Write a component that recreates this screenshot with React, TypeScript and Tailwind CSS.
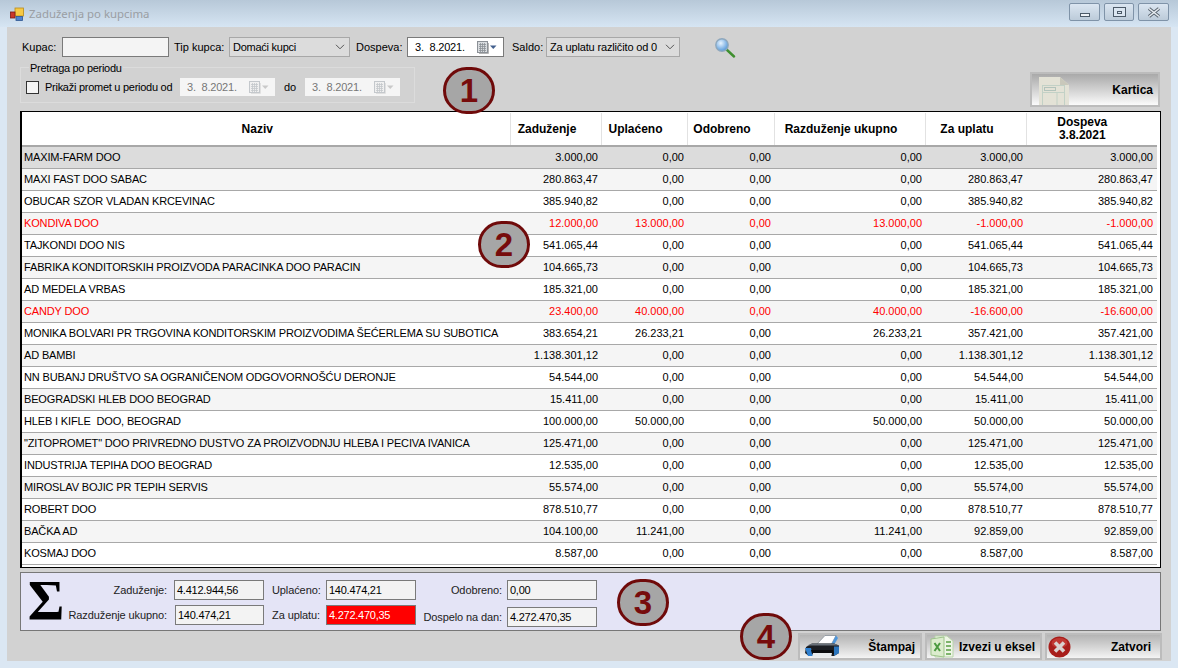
import React from "react";

const FONT = "font-['Liberation_Sans',Arial,sans-serif]";

type Row = { name: string; v: string[]; red?: boolean };

const rows: Row[] = [
  { name: "MAXIM-FARM DOO", v: ["3.000,00", "0,00", "0,00", "0,00", "3.000,00", "3.000,00"] },
  { name: "MAXI FAST DOO SABAC", v: ["280.863,47", "0,00", "0,00", "0,00", "280.863,47", "280.863,47"] },
  { name: "OBUCAR SZOR VLADAN KRCEVINAC", v: ["385.940,82", "0,00", "0,00", "0,00", "385.940,82", "385.940,82"] },
  { name: "KONDIVA DOO", v: ["12.000,00", "13.000,00", "0,00", "13.000,00", "-1.000,00", "-1.000,00"], red: true },
  { name: "TAJKONDI DOO NIS", v: ["541.065,44", "0,00", "0,00", "0,00", "541.065,44", "541.065,44"] },
  { name: "FABRIKA KONDITORSKIH PROIZVODA PARACINKA DOO PARACIN", v: ["104.665,73", "0,00", "0,00", "0,00", "104.665,73", "104.665,73"] },
  { name: "AD MEDELA VRBAS", v: ["185.321,00", "0,00", "0,00", "0,00", "185.321,00", "185.321,00"] },
  { name: "CANDY DOO", v: ["23.400,00", "40.000,00", "0,00", "40.000,00", "-16.600,00", "-16.600,00"], red: true },
  { name: "MONIKA BOLVARI PR TRGOVINA KONDITORSKIM PROIZVODIMA ŠEĆERLEMA SU SUBOTICA", v: ["383.654,21", "26.233,21", "0,00", "26.233,21", "357.421,00", "357.421,00"] },
  { name: "AD BAMBI", v: ["1.138.301,12", "0,00", "0,00", "0,00", "1.138.301,12", "1.138.301,12"] },
  { name: "NN BUBANJ DRUŠTVO SA OGRANIČENOM ODGOVORNOŠĆU DERONJE", v: ["54.544,00", "0,00", "0,00", "0,00", "54.544,00", "54.544,00"] },
  { name: "BEOGRADSKI HLEB DOO BEOGRAD", v: ["15.411,00", "0,00", "0,00", "0,00", "15.411,00", "15.411,00"] },
  { name: "HLEB I KIFLE  DOO, BEOGRAD", v: ["100.000,00", "50.000,00", "0,00", "50.000,00", "50.000,00", "50.000,00"] },
  { name: "\"ZITOPROMET\" DOO PRIVREDNO DUSTVO ZA PROIZVODNJU HLEBA I PECIVA IVANICA", v: ["125.471,00", "0,00", "0,00", "0,00", "125.471,00", "125.471,00"] },
  { name: "INDUSTRIJA TEPIHA DOO BEOGRAD", v: ["12.535,00", "0,00", "0,00", "0,00", "12.535,00", "12.535,00"] },
  { name: "MIROSLAV BOJIC PR TEPIH SERVIS", v: ["55.574,00", "0,00", "0,00", "0,00", "55.574,00", "55.574,00"] },
  { name: "ROBERT DOO", v: ["878.510,77", "0,00", "0,00", "0,00", "878.510,77", "878.510,77"] },
  { name: "BAČKA AD", v: ["104.100,00", "11.241,00", "0,00", "11.241,00", "92.859,00", "92.859,00"] },
  { name: "KOSMAJ DOO", v: ["8.587,00", "0,00", "0,00", "0,00", "8.587,00", "8.587,00"] },
];

const headers = ["Zaduženje", "Uplaćeno", "Odobreno", "Razduženje ukupno", "Za uplatu"];

function Chevron() {
  return (
    <svg width="10" height="6" viewBox="0 0 10 6" fill="none" stroke="#555" strokeWidth="1">
      <path d="M1 0.8 L5 4.8 L9 0.8" />
    </svg>
  );
}

function CalendarIcon({ disabled }: { disabled?: boolean }) {
  const c = disabled ? "#c4c8cc" : "#8b9096";
  return (
    <svg width="20" height="13" viewBox="0 0 20 13">
      <rect x="0.5" y="0.5" width="10" height="11" fill={disabled ? "#f0f0f0" : "#d9dcdf"} stroke={c} />
      <path d="M2 3.5H9M2 5.5H9M2 7.5H9M2 9.5H9M3.5 2V11M5.5 2V11M7.5 2V11" stroke={c} strokeWidth="0.8" />
      <path d="M11.5 2V12.5H2" stroke={disabled ? "#e0e0e0" : "#b5b5b5"} fill="none" />
      <path d="M13 4.5H19.5L16.25 8Z" fill={disabled ? "#c9c9c9" : "#44618e"} />
    </svg>
  );
}

function DateBox({ disabled, className }: { disabled?: boolean; className: string }) {
  return (
    <div
      className={`flex items-center justify-between pl-[7px] pr-[6px] ${className} ${
        disabled ? "bg-[#f5f5f5] text-[#777]" : "bg-white border border-[#7a7a7a] text-black"
      }`}
    >
      <span className="whitespace-pre tracking-[-0.2px]">3.  8.2021.</span>
      <CalendarIcon disabled={disabled} />
    </div>
  );
}

function SelectBox({ text, className, tracking }: { text: string; className: string; tracking: string }) {
  return (
    <div className={`flex items-center justify-between h-5 bg-[#dcdcdc] border border-[#a8a8a8] pl-[3px] pr-[4px] ${className}`}>
      <span className={`whitespace-nowrap ${tracking}`}>{text}</span>
      <Chevron />
    </div>
  );
}

function SearchIcon() {
  return (
    <svg width="22" height="21" viewBox="0 0 22 21" className="ml-[34px]">
      <defs>
        <radialGradient id="lens" cx="0.4" cy="0.35" r="0.7">
          <stop offset="0" stopColor="#e8f4ff" />
          <stop offset="1" stopColor="#4c93d8" />
        </radialGradient>
      </defs>
      <path d="M12 12L20 19.5" stroke="#3f8f2f" strokeWidth="2.4" strokeLinecap="round" />
      <circle cx="8" cy="8" r="6.2" fill="url(#lens)" stroke="#8fa8bd" strokeWidth="1.4" />
    </svg>
  );
}

function WindowIcon() {
  return (
    <svg width="14" height="14" viewBox="0 0 14 14" className="ml-[10px]">
      <rect x="5" y="1" width="8.5" height="8" fill="#f6c945" stroke="#b98a18" strokeWidth="0.8" />
      <rect x="0.5" y="5" width="4.5" height="6" fill="#c9362b" stroke="#7c1b14" strokeWidth="0.8" />
      <rect x="6" y="9.5" width="6.5" height="4" fill="#4f83cf" stroke="#2d5590" strokeWidth="0.8" />
    </svg>
  );
}

function CaptionButton({ kind, className }: { kind: "min" | "max" | "close"; className: string }) {
  return (
    <div className={`h-[18px] flex items-center justify-center rounded-[2px] border border-[#7f93a8] bg-gradient-to-b from-[#dbe6f1] to-[#bccbd9] ${className}`}>
      {kind === "min" && <div className="w-[10px] h-[4px] mt-[5px] border border-[#4c5a68] bg-[#eef2f6]" />}
      {kind === "max" && (
        <div className="w-[13px] h-[10px] border border-[#4c5a68] flex items-center justify-center bg-[#dbe6f1]">
          <div className="w-[5px] h-[3px] border border-[#4c5a68]" />
        </div>
      )}
      {kind === "close" && (
        <svg width="14" height="11" viewBox="0 0 14 11">
          <path d="M2 1.5L12 9.5M12 1.5L2 9.5" stroke="#56616c" strokeWidth="3.4" />
          <path d="M2 1.5L12 9.5M12 1.5L2 9.5" stroke="#e8edf2" strokeWidth="1.6" />
        </svg>
      )}
    </div>
  );
}

function KarticaIcon() {
  return (
    <svg width="30" height="28" viewBox="0 0 30 28" className="self-end">
      <path d="M0 0H21L30 8V28H0Z" fill="#e3e2d6" />
      <path d="M21 0L30 8H21Z" fill="#c9c8bb" />
      <rect x="3.5" y="8.5" width="22" height="20" fill="none" stroke="#c2d1c6" />
      <rect x="5.5" y="10.5" width="11" height="3" fill="none" stroke="#b2c3bb" />
      <path d="M3.5 15.5H25.5M18 15.5V28" stroke="#c2d1c6" />
    </svg>
  );
}

function PrinterIcon() {
  return (
    <svg width="36" height="23" viewBox="0 0 36 23">
      <path d="M12 10L21 0.5H32L27 10Z" fill="#ffffff" stroke="#7d8790" strokeWidth="0.7" />
      <path d="M32 0.5L34 3L30 10H27Z" fill="#4f97dc" />
      <path d="M2 12L8 8.5H30L35 10.5V18L30 21H5L1 18Z" fill="#1c1f24" />
      <path d="M8 8.5H30L35 10.5H3Z" fill="#6a727b" />
      <path d="M1 13L4 21H9L7 13Z" fill="#2f80d0" />
      <path d="M30 11.5H35V18L30 21Z" fill="#2b75bd" />
      <path d="M7 15H29L30 19H8Z" fill="#0b0c0e" />
      <path d="M9 18H28L27 22.5H8Z" fill="#e9ecee" />
    </svg>
  );
}

function ExcelIcon() {
  return (
    <svg width="24" height="24" viewBox="0 0 24 24">
      <path d="M5 1H17L23 6V22H5Z" fill="#eef5e6" stroke="#b9d4ab" />
      <path d="M1 4L14 2V22L1 20Z" fill="#dcecce" stroke="#9cc489" />
      <path d="M4.5 8L10 16M10 8L4.5 16" stroke="#4b9a40" strokeWidth="2" />
      <path d="M16 7H21M16 11H21M16 15H21M16 19H21" stroke="#7eb56c" strokeWidth="2" />
    </svg>
  );
}

function CloseIcon() {
  return (
    <svg width="23" height="22" viewBox="0 0 23 22">
      <ellipse cx="11.5" cy="11" rx="11" ry="10.5" fill="#a81e1b" />
      <ellipse cx="11.5" cy="7" rx="8" ry="5" fill="#d8524c" opacity="0.5" />
      <path d="M7 6.5L16 15.5M16 6.5L7 15.5" stroke="#d9d2d0" strokeWidth="3.6" />
    </svg>
  );
}

function ActionButton({ icon, label, className, pad }: { icon: React.ReactNode; label: string; className: string; pad: string }) {
  return (
    <div className={`h-[27px] border-2 border-[#bcbcbc] bg-gradient-to-b from-[#b4b4b4] to-[#f4f4f4] flex items-center justify-between ${pad} ${className}`}>
      {icon}
      <span className="font-bold text-[12px] text-black">{label}</span>
    </div>
  );
}

function SumField({ label, value, labelW, valueW, red }: { label: string; value: string; labelW: string; valueW: string; red?: boolean }) {
  return (
    <div className="flex items-center">
      <span className={`text-right whitespace-nowrap tracking-[-0.1px] ${labelW}`}>{label}</span>
      <div
        className={`h-5 border border-[#7a7a7a] flex items-center pl-[2px] tracking-[-0.25px] ${valueW} ${
          red ? "bg-[#ff0000] text-white" : "bg-[#f3f3f3] text-black"
        }`}
      >
        {value}
      </div>
    </div>
  );
}

function Badge({ n, className }: { n: number; className: string }) {
  return (
    <div className={`absolute w-[52px] h-[47px] rounded-full border-[3px] border-[#6f0a0a] bg-[#a6a6a6] flex items-center justify-center text-[33px] leading-none font-bold text-[#770c0c] ${className}`}>
      {n}
    </div>
  );
}

export default function App() {
  return (
    <div className={`relative w-[1178px] h-[668px] overflow-hidden bg-[#dbe7f3] text-[11px] text-black ${FONT}`}>
      {/* Title bar */}
      <div className="h-[27px] flex items-center bg-gradient-to-b from-[#b7c8d8] to-[#d6e5f3]">
        <WindowIcon />
        <span className="ml-[5px] text-[#9a9ea3] text-[11.4px] font-['Noto_Sans',sans-serif]">Zaduženja po kupcima</span>
        <div className="ml-auto flex gap-[4px] mr-[9px] -mt-[3px]">
          <CaptionButton kind="min" className="w-[31px]" />
          <CaptionButton kind="max" className="w-[30px]" />
          <CaptionButton kind="close" className="w-[31px]" />
        </div>
      </div>

      {/* Client area */}
      <div className="ml-[7px] w-[1164px] h-[634px] bg-[#d2d2d2] pl-[13px] pt-[10px]">
        {/* Filters */}
        <div className="flex items-center h-5 pl-[2px]">
          <span className="w-[40px]">Kupac:</span>
          <div className="w-[107px] h-5 bg-[#f4f4f4] border border-[#7a7a7a]" />
          <span className="ml-[5px] w-[55px]">Tip kupca:</span>
          <SelectBox text="Domaći kupci" className="w-[121px]" tracking="tracking-[-0.25px]" />
          <span className="ml-[6px] w-[51px]">Dospeva:</span>
          <DateBox className="w-[97px] h-5" />
          <span className="ml-[8px] w-[34px]">Saldo:</span>
          <SelectBox text="Za uplatu različito od 0" className="w-[134px]" tracking="tracking-[-0.15px]" />
          <SearchIcon />
        </div>

        {/* Period search + Kartica */}
        <div className="mt-[10px] h-[40px] flex justify-between pr-[11px]">
          <div className="relative w-[395px] h-[36px] border border-[#dcdcdc] pl-[5px] pt-[4px] flex items-center">
            <span className="absolute left-[8px] -top-[7px] bg-[#d2d2d2] px-px leading-[14px] tracking-[-0.3px]">Pretraga po periodu</span>
            <div className="w-[13px] h-[13px] border border-[#333] bg-[#f5f5f5] mr-[6px]" />
            <span className="w-[135px] whitespace-nowrap tracking-[-0.27px]">Prikaži promet u periodu od</span>
            <DateBox disabled className="w-[95px] h-[18px]" />
            <span className="w-[30px] text-center">do</span>
            <DateBox disabled className="w-[95px] h-[18px]" />
          </div>
          <div className="w-[130px] h-[35px] mt-[5px] border-2 border-[#bcbcbc] bg-gradient-to-b from-[#a9a9a9] to-[#fbfbfb] flex items-center justify-between pl-[7px] pr-[5px] overflow-hidden">
            <KarticaIcon />
            <span className="font-bold text-[12px]">Kartica</span>
          </div>
        </div>

        {/* Grid */}
        <div className="mt-[4px] w-[1141px] h-[457px] bg-white border border-l-2 border-black pt-px overflow-hidden">
          <table className="table-fixed border-collapse w-[1135px]">
            <colgroup>
              <col className="w-[488px]" />
              <col className="w-[91px]" />
              <col className="w-[86px]" />
              <col className="w-[87px]" />
              <col className="w-[151px]" />
              <col className="w-[101px]" />
              <col className="w-[131px]" />
            </colgroup>
            <thead>
              <tr className="h-[33px] border-b-2 border-[#a8a8a8] text-[12px] font-bold">
                <th className="pr-[17px] text-center border-r border-[#e2e2e2]">Naziv</th>
                {headers.map((h) => (
                  <th key={h} className="pr-[17px] text-center border-r border-[#e2e2e2] whitespace-nowrap">{h}</th>
                ))}
                <th className="pr-[19px] text-center leading-[13px]">
                  Dospeva
                  <br />
                  3.8.2021
                </th>
              </tr>
            </thead>
            <tbody>
              {rows.map((r, i) => (
                <tr
                  key={r.name}
                  className={`h-[22px] border-b border-[#a8a8a8] ${
                    i === 0 ? "bg-[#dcdcdc]" : i % 2 === 1 ? "bg-[#f5f5f5]" : "bg-white"
                  } ${r.red ? "text-[#ff0000]" : "text-black"}`}
                >
                  <td className="pl-[2px] whitespace-pre overflow-hidden tracking-[-0.15px]">{r.name}</td>
                  {r.v.map((x, j) => (
                    <td key={j} className={`text-right ${j === 5 ? "pr-[4px]" : "pr-[3px]"}`}>{x}</td>
                  ))}
                </tr>
              ))}
            </tbody>
          </table>
        </div>

        {/* Totals */}
        <div className="mt-[4px] w-[1141px] h-[59px] bg-[#e4e4f6] border border-[#777] flex text-[#222]">
          <div className="w-[38px] ml-[6px] text-[56px] leading-[56px] font-bold text-black text-center font-['Liberation_Serif',serif]">Σ</div>
          <div className="flex flex-col gap-[5px] pt-[7px]">
            <SumField label="Zaduženje:" value="4.412.944,56" labelW="w-[122px] pr-[7px] ml-[-13px]" valueW="w-[90px]" />
            <SumField label="Razduženje ukupno:" value="140.474,21" labelW="w-[122px] pr-[7px] ml-[-13px]" valueW="w-[89px] ml-[1px]" />
          </div>
          <div className="flex flex-col gap-[5px] pt-[7px] ml-[8px]">
            <SumField label="Uplaćeno:" value="140.474,21" labelW="w-[54px] pr-[6px]" valueW="w-[90px]" />
            <SumField label="Za uplatu:" value="4.272.470,35" labelW="w-[54px] pr-[6px]" valueW="w-[90px]" red />
          </div>
          <div className="flex flex-col gap-[7px] pt-[7px]">
            <SumField label="Odobreno:" value="0,00" labelW="w-[91px] pr-[5px]" valueW="w-[90px]" />
            <SumField label="Dospelo na dan:" value="4.272.470,35" labelW="w-[91px] pr-[5px]" valueW="w-[90px]" />
          </div>
        </div>

        {/* Actions */}
        <div className="mt-[2px] w-[1142px] flex justify-end gap-[3px]">
          <ActionButton icon={<PrinterIcon />} label="Štampaj" className="w-[124px]" pad="pl-[4px] pr-[5px]" />
          <ActionButton icon={<ExcelIcon />} label="Izvezi u eksel" className="w-[117px]" pad="pl-[3px] pr-[5px]" />
          <ActionButton icon={<CloseIcon />} label="Zatvori" className="w-[117px]" pad="pl-[1px] pr-[9px]" />
        </div>
      </div>

      <Badge n={1} className="left-[443px] top-[67px]" />
      <Badge n={2} className="left-[478px] top-[221px]" />
      <Badge n={3} className="left-[617px] top-[579px]" />
      <Badge n={4} className="left-[740px] top-[613px]" />
    </div>
  );
}
